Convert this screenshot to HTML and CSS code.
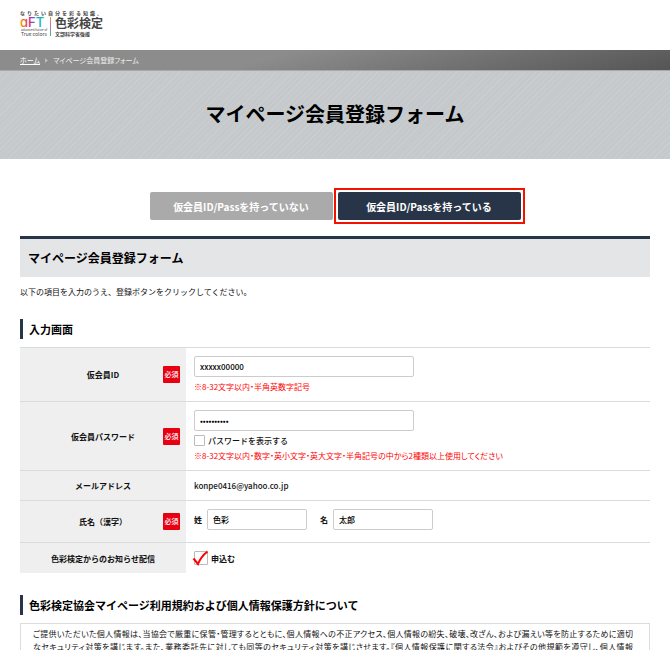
FILE: index.html
```html
<!DOCTYPE html>
<html lang="ja">
<head>
  <meta charset="UTF-8">
  <meta name="viewport" content="width=device-width, initial-scale=1.0">
  <title>マイページ会員登録フォーム</title>
  <link rel="stylesheet" href="styles.css">
</head>
<body>
  <header class="site-header">
    <a href="#" class="logo" aria-label="色彩検定">
      <svg width="88" height="28" viewBox="0 0 88 28">
        <defs>
          <linearGradient id="aft-color" x1="0" x2="1" y1="0" y2="0">
            <stop offset="0" stop-color="#f7a600"/>
            <stop offset="0.25" stop-color="#ea4c3c"/>
            <stop offset="0.42" stop-color="#d6218c"/>
            <stop offset="0.6" stop-color="#3c7be0"/>
            <stop offset="0.8" stop-color="#12b5c9"/>
            <stop offset="1" stop-color="#3bb54a"/>
          </linearGradient>
          <linearGradient id="line-color" x1="0" x2="0" y1="0" y2="1">
            <stop offset="0" stop-color="#f08a3c"/>
            <stop offset="0.5" stop-color="#b07ab8"/>
            <stop offset="1" stop-color="#2fc08f"/>
          </linearGradient>
        </defs>
        <text x="0" y="5" class="logo-copy">なりたい自分を彩る知識。</text>
        <text x="0" y="17" class="logo-aft">ɑFT</text>
        <text x="1" y="21" class="logo-tiny">advanced future of</text>
        <text x="1" y="26" class="logo-true">True colors</text>
        <rect x="30" y="7" width="1" height="19" fill="url(#line-color)"/>
        <text x="35" y="18" class="logo-name">色彩検定</text>
        <text x="35" y="26" class="logo-sub">文部科学省後援</text>
      </svg>
    </a>
  </header>

  <nav class="breadcrumb">
    <a href="#">ホーム</a>
    <svg width="3" height="5" viewBox="0 0 3 5"><path d="M0 0 L3 2.5 L0 5 Z" fill="#bbb"/></svg>
    <span>マイページ会員登録フォーム</span>
  </nav>

  <div class="hero">
    <h1>マイページ会員登録フォーム</h1>
  </div>

  <main>
    <div class="tabs">
      <button type="button" class="tab">仮会員ID/Passを持っていない</button>
      <div class="tab-frame">
        <button type="button" class="tab active">仮会員ID/Passを持っている</button>
      </div>
    </div>

    <h2>マイページ会員登録フォーム</h2>
    <p class="lead">以下の項目を入力のうえ、登録ボタンをクリックしてください。</p>

    <form>
      <h3>入力画面</h3>
      <table class="form-table">
        <tbody>
          <tr>
            <th scope="row">
              <div class="head"><label for="member-id">仮会員ID</label><span class="required">必須</span></div>
            </th>
            <td>
              <input type="text" id="member-id" class="wide" value="xxxxx00000">
              <p class="note">※8-32文字以内・半角英数字記号</p>
            </td>
          </tr>
          <tr>
            <th scope="row">
              <div class="head"><label for="member-pass">仮会員パスワード</label><span class="required">必須</span></div>
            </th>
            <td>
              <input type="password" id="member-pass" class="wide" value="xxxxx00000">
              <label class="check"><input type="checkbox" id="show-pass">パスワードを表示する</label>
              <p class="note">※8-32文字以内・数字・英小文字・英大文字・半角記号の中から2種類以上使用してください</p>
            </td>
          </tr>
          <tr>
            <th scope="row"><div class="head"><span>メールアドレス</span></div></th>
            <td>konpe0416@yahoo.co.jp</td>
          </tr>
          <tr>
            <th scope="row">
              <div class="head"><span>氏名（漢字）</span><span class="required">必須</span></div>
            </th>
            <td>
              <div class="names">
                <label for="last-name">姓</label>
                <input type="text" id="last-name" value="色彩">
                <label for="first-name">名</label>
                <input type="text" id="first-name" value="太郎">
              </div>
            </td>
          </tr>
          <tr>
            <th scope="row"><div class="head"><span>色彩検定からのお知らせ配信</span></div></th>
            <td>
              <label class="check apply">
                <input type="checkbox" id="news" checked>
                <svg class="mark" width="18" height="16" viewBox="0 0 18 16"><path d="M1.5 8.5 L6 14 C8 9 11 5 15.5 1.5" fill="none" stroke="#f00" stroke-width="2"/></svg>
                申込む
              </label>
            </td>
          </tr>
        </tbody>
      </table>

      <h3>色彩検定協会マイページ利用規約および個人情報保護方針について</h3>
      <div class="terms">
        <p>ご提供いただいた個人情報は、当協会で厳重に保管・管理するとともに、個人情報への不正アクセス、個人情報の紛失、破壊、改ざん、および漏えい等を防止するために適切<br>なセキュリティ対策を講じます。また、業務委託先に対しても同等のセキュリティ対策を講じさせます。『個人情報保護に関する法令』およびその他規範を遵守し、個人情報</p>
      </div>
    </form>
  </main>
</body>
</html>
```
FILE: styles.css
```css
* {
  box-sizing: border-box;
}

html {
  overflow: hidden;
}

body {
  margin: 0;
  font-family: "Noto Sans CJK JP", sans-serif;
  font-size: 8px;
  font-weight: 500;
  line-height: 13px;
  color: #111;
  background: #fff;
}

h1, h2, h3, p {
  margin: 0;
}

.site-header {
  height: 50px;
  padding: 10px 20px;
}

.logo svg {
  display: block;
}

.logo text {
  font-weight: 700;
  fill: #444;
}

.logo .logo-copy {
  font-size: 5px;
  letter-spacing: 2px;
}

.logo .logo-aft {
  font-family: Inter, sans-serif;
  font-size: 13px;
  font-weight: 500;
  fill: url(#aft-color);
}

.logo .logo-tiny {
  font-size: 3px;
  font-weight: 400;
}

.logo .logo-true {
  font-size: 5px;
  font-weight: 400;
}

.logo .logo-name {
  font-size: 12px;
}

.logo .logo-sub {
  font-size: 5px;
}

.breadcrumb {
  display: flex;
  align-items: center;
  gap: 5px;
  height: 20px;
  padding: 0 20px;
  font-size: 7px;
  font-weight: 400;
  font-feature-settings: "palt";
  color: #eee;
  background: linear-gradient(165deg, #8c8c8c 40%, #555);
}

.breadcrumb a {
  color: #fff;
}

.hero {
  padding: 29px 20px 31px;
  border-top: 1px solid #a9a9a9;
  text-align: center;
  background: repeating-linear-gradient(135deg, #c5c9cc 0, #c5c9cc 3px, #cdd1d4 4px);
}

h1 {
  font-size: 20px;
  line-height: 28px;
  color: #000;
}

main {
  padding: 29px 20px 0;
}

.tabs {
  display: flex;
  justify-content: center;
  align-items: center;
  gap: 1px;
  margin-bottom: 12px;
  padding-left: 4px;
}

.tab {
  width: 183px;
  height: 28px;
  padding: 0;
  border: none;
  border-radius: 2px;
  font: inherit;
  font-size: 10px;
  font-weight: 700;
  color: #fff;
  background: #aaa;
  cursor: pointer;
}

.tab.active {
  background: #283448;
}

.tab-frame {
  display: flex;
  padding: 2px;
  border: 2px solid #f01400;
}

h2 {
  padding: 8px;
  border-top: 3px solid #283448;
  font-size: 12px;
  line-height: 22px;
  color: #000;
  background: #e4e5e7;
}

.lead {
  margin: 8px 0 21px;
  font-weight: 400;
}

h3 {
  margin-bottom: 8px;
  padding-left: 6px;
  border-left: 3px solid #283448;
  font-size: 11px;
  line-height: 20px;
  color: #000;
}

.form-table {
  width: 100%;
  margin-bottom: 22px;
  border-collapse: collapse;
}

.form-table tr {
  border-top: 1px solid #d9dcdd;
}

.form-table th {
  width: 166px;
  padding: 0 6px;
  background: #efefef;
}

.form-table td {
  padding: 8px;
}

.head {
  display: grid;
  grid-template-columns: 1fr auto 1fr;
  align-items: center;
}

.head > :first-child {
  grid-column: 2;
}

.required {
  justify-self: end;
  width: 17px;
  border-radius: 1px;
  font-size: 7px;
  line-height: 17px;
  font-weight: 500;
  text-align: center;
  color: #fff;
  background: #e60012;
}

input[type="text"],
input[type="password"] {
  display: block;
  width: 100px;
  height: 21px;
  padding: 0 5px;
  border: 1px solid #ccc;
  border-radius: 2px;
  font: inherit;
  color: #000;
  background: #fff;
}

input.wide {
  width: 220px;
}

.note {
  margin-top: 3px;
  font-weight: 400;
  font-feature-settings: "palt";
  color: #f00;
}

.check {
  display: flex;
  align-items: center;
  gap: 3px;
  margin-top: 4px;
  line-height: 11px;
}

.check input {
  appearance: none;
  width: 11px;
  height: 11px;
  margin: 0;
  border: 1px solid #bbb;
  border-radius: 1px;
}

.names {
  display: flex;
  align-items: center;
  gap: 5px;
  padding-bottom: 4px;
  font-weight: 700;
}

.names input {
  font-weight: 500;
}

.names input + label {
  margin-left: 8px;
}

.check.apply {
  position: relative;
  margin: 0;
  font-weight: 700;
}

.check.apply input {
  width: 14px;
  height: 14px;
}

.mark {
  position: absolute;
  left: -2px;
  top: -1px;
}

.terms {
  padding: 3px 16px 3px 12px;
  border: 1px solid #ddd;
  font-weight: 400;
  font-feature-settings: "palt";
  text-align: justify;
  text-align-last: justify;
}
```
